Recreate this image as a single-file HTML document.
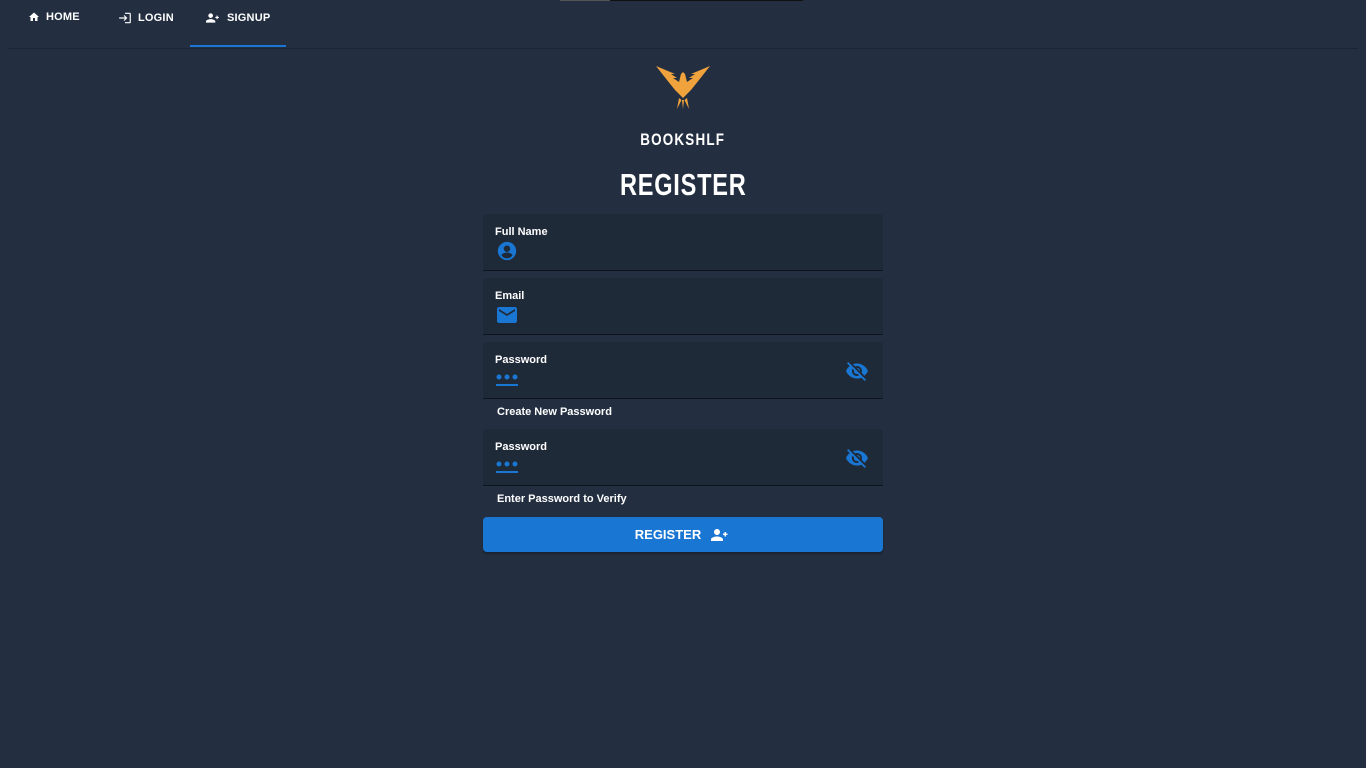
<!DOCTYPE html>
<html><head><style>
body{margin:0;width:1366px;height:768px;background:#232f40;font-family:"Liberation Sans",sans-serif;color:#fff;position:relative;overflow:hidden}
.topline{position:absolute;left:560px;top:0;width:243px;height:1px;background:#111}
.topline2{position:absolute;left:560px;top:0;width:50px;height:1px;background:#555}
.nav{position:absolute;top:0;left:8px;right:8px;height:48px;border-bottom:1px solid #1c2533}
.nav a{position:absolute;top:11px;font-size:11px;font-weight:bold;color:#fff;display:flex;align-items:center;gap:6px;letter-spacing:0.2px}
.ul{position:absolute;left:190px;top:45px;width:96px;height:2px;background:#1976d2}
.c{position:absolute;left:0;width:1366px;text-align:center;font-weight:bold}
.c span{display:inline-block}
.field{position:absolute;left:483px;width:400px;height:56px;background:#1f2a39;border-bottom:1px solid #0f141c;border-radius:4px 4px 0 0}
.field .lb{position:absolute;left:12px;top:12px;font-size:11px;font-weight:bold}
.help{position:absolute;left:497px;font-size:11px;font-weight:bold}
.btn{position:absolute;left:483px;top:517px;width:400px;height:35px;background:#1976d2;border-radius:4px;display:flex;justify-content:center;align-items:center;gap:8px;font-weight:bold;font-size:13px;box-shadow:0 2px 2px rgba(0,0,0,.3)}
.dots{position:absolute;left:13px;top:31px;width:22px;height:14px}
.eye{position:absolute;right:14px;top:17px}
</style></head><body>
<div class="topline"></div><div class="topline2"></div>
<div class="nav">
<a style="left:20px"><svg width="12" height="12" viewBox="0 0 24 24"><path fill="#fff" d="M10 20v-6h4v6h5v-8h3L12 3 2 12h3v8z"/></svg>HOME</a>
<a style="left:110px"><svg width="14" height="14" viewBox="0 0 24 24"><path fill="#fff" d="M11 7 9.6 8.4l2.6 2.6H2v2h10.2l-2.6 2.6L11 17l5-5zm9 12h-8v2h8c1.1 0 2-.9 2-2V5c0-1.1-.9-2-2-2h-8v2h8z"/></svg>LOGIN</a>
<a style="left:197px"><svg width="16" height="14" viewBox="0 0 24 24"><path fill="#fff" d="M8 12c2.2 0 4-1.8 4-4s-1.8-4-4-4-4 1.8-4 4 1.8 4 4 4zm0 2c-2.7 0-8 1.3-8 4v2h16v-2c0-2.7-5.3-4-8-4zm12-4V8h-2v2h-2v2h2v2h2v-2h2v-2z"/></svg>SIGNUP</a>
</div>
<div class="ul"></div>
<svg style="position:absolute;left:655px;top:64px" width="56" height="46" viewBox="0 0 56 46"><g fill="#f0a23c"><path d="M1 2 L20 10 L16 10 L22 14 L18 14 L24 18 L26 10 L28 8 L30 10 L32 18 L38 14 L34 14 L40 10 L36 10 L55 2 L44 16 L36 26 L32 30 L28 34 L24 30 L20 26 L12 16Z"/><path d="M24 34 L22 45 L26.5 36Z M27 36 L28 45 L29 36Z M32 34 L34 45 L29.5 36Z"/></g></svg>
<div class="c" style="top:130px;font-size:17px;letter-spacing:1.5px"><span style="transform:scaleX(0.79)">BOOKSHLF</span></div>
<div class="c" style="top:167px;font-size:31px;letter-spacing:1px"><span style="transform:scaleX(0.76)">REGISTER</span></div>
<div class="field" style="top:214px"><div class="lb">Full Name</div><svg style="position:absolute;left:13px;top:26px" width="22" height="22" viewBox="0 0 24 24"><path fill="#1976d2" d="M12 2C6.5 2 2 6.5 2 12s4.5 10 10 10 10-4.5 10-10S17.5 2 12 2zm0 4c1.9 0 3.5 1.6 3.5 3.5S13.9 13 12 13s-3.5-1.6-3.5-3.5S10.1 6 12 6zm0 14c-2.5 0-4.7-1.3-6-3.2 0-2 4-3.1 6-3.1s6 1.1 6 3.1c-1.3 1.9-3.5 3.2-6 3.2z"/></svg></div>
<div class="field" style="top:278px"><div class="lb">Email</div><svg style="position:absolute;left:12px;top:25px" width="24" height="24" viewBox="0 0 24 24"><path fill="#1976d2" d="M20 4H4c-1.1 0-2 .9-2 2v12c0 1.1.9 2 2 2h16c1.1 0 2-.9 2-2V6c0-1.1-.9-2-2-2zm0 4-8 5-8-5V6l8 5 8-5z"/></svg></div>
<div class="field" style="top:342px"><div class="lb">Password</div><svg class="dots" viewBox="0 0 22 14"><circle cx="3" cy="4" r="2.5" fill="#1976d2"/><circle cx="11" cy="4" r="2.5" fill="#1976d2"/><circle cx="19" cy="4" r="2.5" fill="#1976d2"/><rect x="0" y="11" width="22" height="2" fill="#1976d2"/></svg><svg class="eye" width="24" height="24" viewBox="0 0 24 24"><path fill="#1976d2" d="M12 7c2.8 0 5 2.2 5 5 0 .6-.1 1.3-.4 1.8l2.9 2.9c1.5-1.3 2.7-2.9 3.4-4.7-1.7-4.4-6-7.5-11-7.5-1.4 0-2.7.3-4 .7l2.2 2.2c.6-.3 1.2-.4 1.9-.4zM2 4.3l2.3 2.3.5.4C3.1 8.3 1.8 10 1 12c1.700 4.4 6 7.5 11 7.5 1.6 0 3-.3 4.4-.8l.4.4 2.9 2.9 1.3-1.3L3.3 3zm5.5 5.5 1.5 1.5c0 .2-.1.5-.1.7 0 1.7 1.3 3 3 3 .2 0 .4 0 .7-.1l1.5 1.5c-.7.3-1.4.6-2.2.6-2.8 0-5-2.2-5-5 0-.8.2-1.5.6-2.2zm4.3-.8 3.2 3.2V12c0-1.7-1.3-3-3-3z"/></svg></div>
<div class="help" style="top:406px">Create New Password</div>
<div class="field" style="top:429px"><div class="lb">Password</div><svg class="dots" viewBox="0 0 22 14"><circle cx="3" cy="4" r="2.5" fill="#1976d2"/><circle cx="11" cy="4" r="2.5" fill="#1976d2"/><circle cx="19" cy="4" r="2.5" fill="#1976d2"/><rect x="0" y="11" width="22" height="2" fill="#1976d2"/></svg><svg class="eye" width="24" height="24" viewBox="0 0 24 24"><path fill="#1976d2" d="M12 7c2.8 0 5 2.2 5 5 0 .6-.1 1.3-.4 1.8l2.9 2.9c1.5-1.3 2.7-2.9 3.4-4.7-1.7-4.4-6-7.5-11-7.5-1.4 0-2.7.3-4 .7l2.2 2.2c.6-.3 1.2-.4 1.9-.4zM2 4.3l2.3 2.3.5.4C3.1 8.3 1.8 10 1 12c1.7 4.4 6 7.5 11 7.5 1.6 0 3-.3 4.4-.8l.4.4 2.9 2.9 1.3-1.3L3.3 3zm5.5 5.5 1.5 1.5c0 .2-.1.5-.1.7 0 1.7 1.3 3 3 3 .2 0 .4 0 .7-.1l1.5 1.5c-.7.3-1.4.6-2.2.6-2.8 0-5-2.2-5-5 0-.8.2-1.5.6-2.2zm4.3-.8 3.2 3.2V12c0-1.7-1.3-3-3-3z"/></svg></div>
<div class="help" style="top:493px">Enter Password to Verify</div>
<div class="btn">REGISTER <svg width="22" height="18" viewBox="0 0 24 24"><path fill="#fff" d="M8 12c2.2 0 4-1.8 4-4s-1.8-4-4-4-4 1.8-4 4 1.8 4 4 4zm0 2c-2.7 0-8 1.3-8 4v2h16v-2c0-2.7-5.3-4-8-4zm12-4V8h-2v2h-2v2h2v2h2v-2h2v-2z"/></svg></div>
</body></html>
